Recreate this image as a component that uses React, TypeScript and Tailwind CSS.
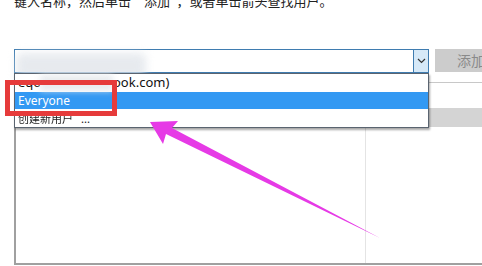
import React from "react";

export default function App() {
  return (
    <div
      className="relative w-[482px] h-[266px] overflow-hidden bg-white"
      style={{ fontFamily: '"Noto Sans", "Noto Sans CJK SC", sans-serif' }}
    >
      {/* instruction text, cut at top */}
      <div className="mt-[-7px] pl-[14px] text-[13px] leading-[16px] text-[#222]" style={{ fontFamily: '"Noto Sans CJK SC", sans-serif' }}>
        键入名称，然后单击“添加”，或者单击箭头查找用户。
      </div>

      {/* combobox row */}
      <div className="mt-[40px] flex w-[520px] items-start">
        <div className="ml-[14px] flex h-[24px] w-[415px] shrink-0 border border-[#3f7cb0] bg-white">
          <div className="flex-1" />
          <div className="flex w-[15px] items-center justify-center border-l border-[#3f7cb0] bg-[#d6e9f8]">
            <svg width="9" height="6" viewBox="0 0 9 6">
              <path d="M1 1 L4.5 4.5 L8 1" stroke="#333" strokeWidth="1.2" fill="none" />
            </svg>
          </div>
        </div>
        <div
          className="ml-[6px] flex h-[23px] w-[70px] shrink-0 items-center pl-[22px] text-[14px] text-[#8a8a8a] bg-[#cccccc]"
          style={{ fontFamily: '"Noto Sans CJK SC", sans-serif' }}
        >
          添加
        </div>
      </div>

      {/* list box behind */}
      <div className="ml-[14px] mt-[9px] flex h-[183px] flex-col border-l-2 border-b-2 border-t border-l-[#a0a0a0] border-b-[#a0a0a0] border-t-[#c8c8c8]">
        <div className="h-[25px] shrink-0" />
        <div className="h-[19px] shrink-0 bg-[#d4d4d4]" />
        <div className="flex flex-1">
          <div className="w-[350px] border-r border-[#e4e4e4]" />
          <div className="flex-1" />
        </div>
      </div>

      {/* blurred blob over input */}
      <div className="absolute left-[16px] top-[53px] h-[26px] w-[130px] rounded-[6px] bg-[#dde2e8] opacity-70 blur-[4px]" />

      {/* dropdown list */}
      <div className="absolute left-[14px] top-[73px] flex w-[415px] flex-col border border-[#5a6470] bg-white shadow-[1px_2px_2px_rgba(0,0,0,0.35)]">
        <div className="flex h-[18px] items-center pl-[3px] text-[13px] text-[#111]">
          <span className="w-[22px] overflow-hidden">eqo</span>
          <span className="h-[16px] w-[73px] bg-[#e6e9ed] opacity-90 blur-[3px]" />
          <span>ook.com)</span>
        </div>
        <div className="flex h-[17px] items-center bg-[#3399f3] pl-[3px] text-[12px] text-white">
          Everyone
        </div>
        <div
          className="flex h-[18px] items-center pl-[3px] text-[11px] text-[#222]"
          style={{ fontFamily: '"Noto Sans CJK SC", sans-serif' }}
        >
          <span className="blur-[0.4px]">创建新用户</span>
          <span className="ml-[8px]">...</span>
        </div>
      </div>

      {/* red highlight box */}
      <div className="absolute left-[5px] top-[80px] h-[36px] w-[112px] border-[5px] border-[#e63b3b]" />

      {/* pink arrow */}
      <svg className="absolute left-0 top-0" width="482" height="266" viewBox="0 0 482 266">
        <polygon
          points="150,122 178,121 172,128 380,238 166,134 163,144"
          fill="#e63ae6"
        />
      </svg>
    </div>
  );
}
